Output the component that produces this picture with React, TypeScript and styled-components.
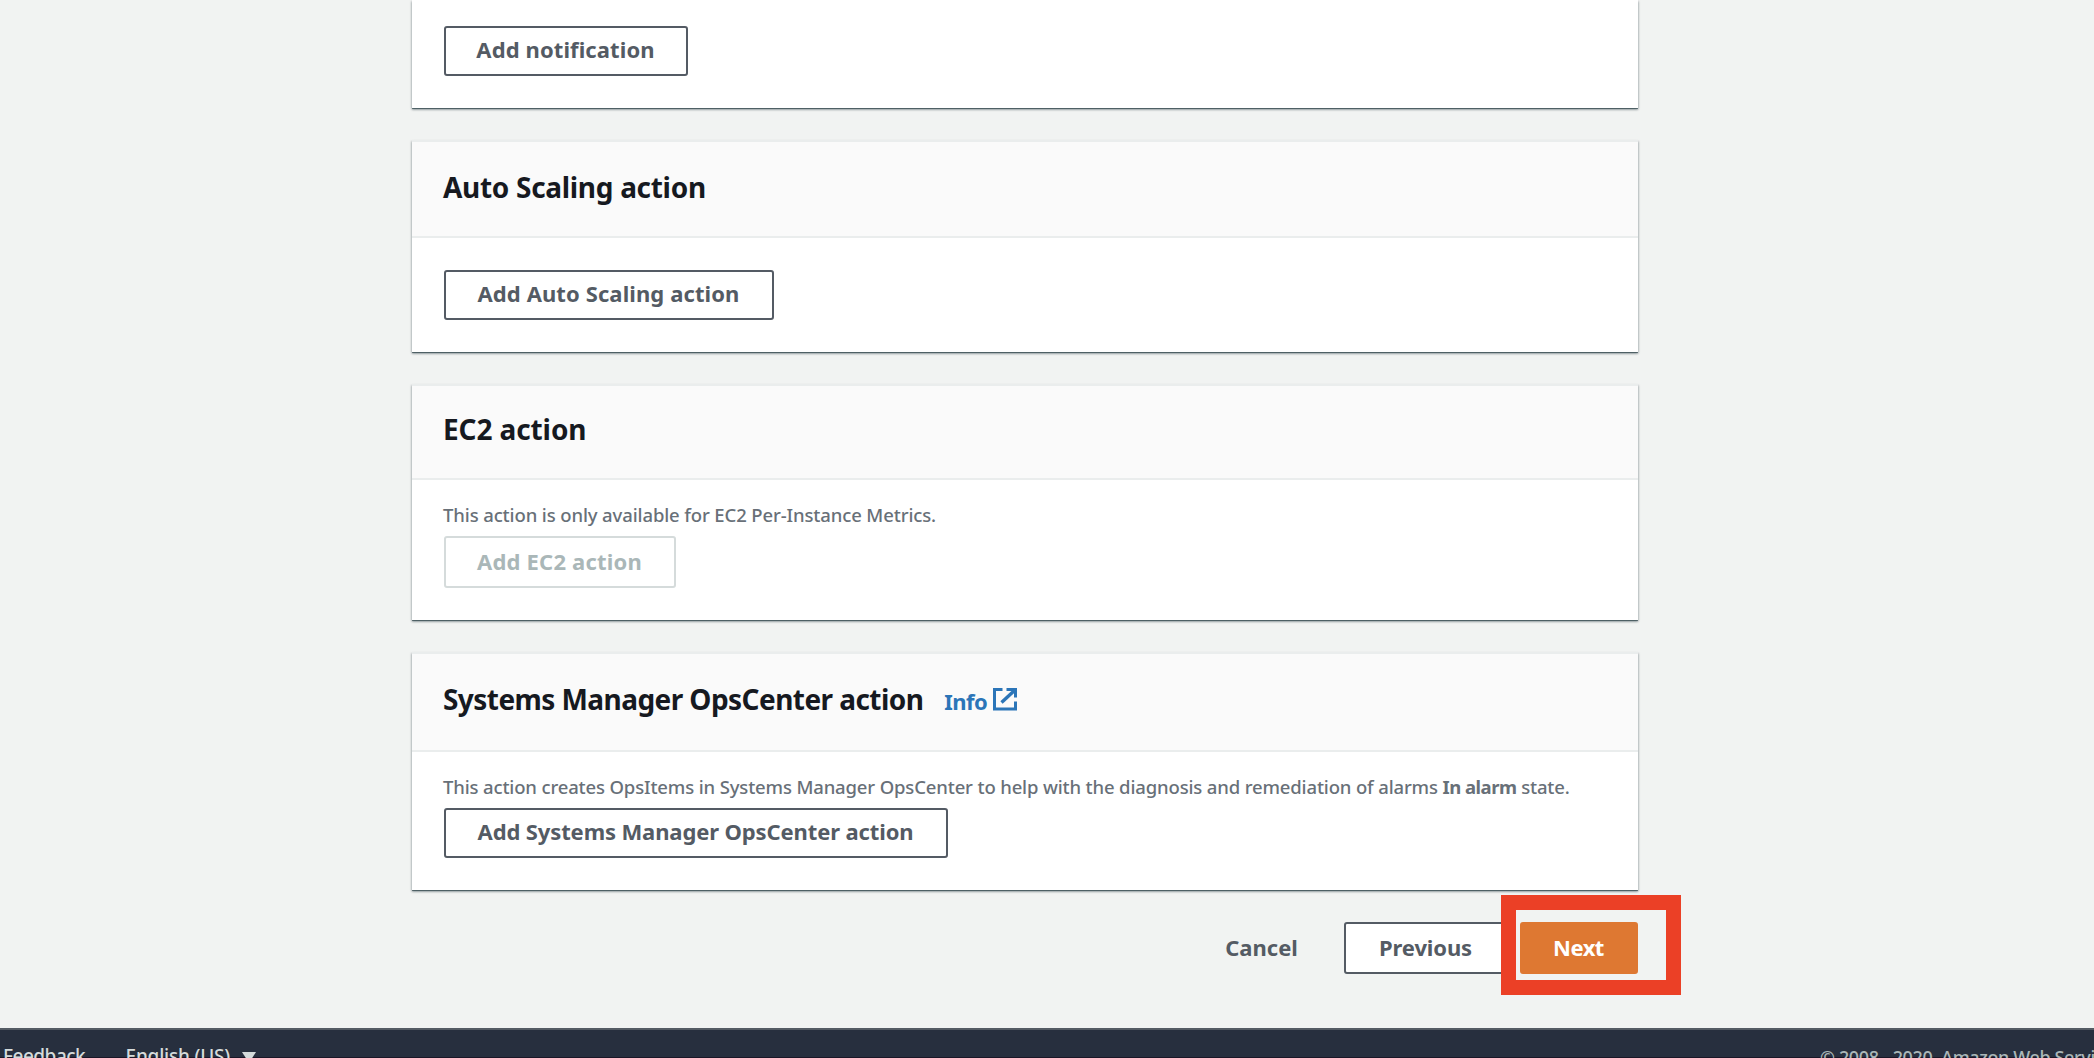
import React from 'react';
import styled, { createGlobalStyle } from 'styled-components';

const GlobalStyle = createGlobalStyle`
  * { box-sizing: border-box; }
  body {
    margin: 0;
    background: #f1f3f2;
    font-family: "Noto Sans", "Open Sans", sans-serif;
    overflow: hidden;
  }
`;

const Page = styled.div`
  display: flex;
  flex-direction: column;
  height: 1058px;
  overflow: hidden;
  background: #f1f3f2;
`;

const Main = styled.main`
  display: flex;
  flex-direction: column;
  gap: 32px;
  width: 1226px;
  height: 1028px;
  flex: none;
  margin-left: 412px;
`;

const Card = styled.section<{ $height: number }>`
  flex: none;
  height: ${(p) => p.$height}px;
  background: #fff;
  box-shadow: 0 2px 2px 0 rgba(0, 28, 36, 0.3), 1px 1px 2px 0 rgba(0, 28, 36, 0.15),
    -1px 1px 2px 0 rgba(0, 28, 36, 0.15), 0 1px 0 0 #879596;
`;

const CardHeader = styled.header<{ $height: number; $top: number }>`
  display: flex;
  align-items: flex-start;
  height: ${(p) => p.$height}px;
  padding: ${(p) => p.$top}px 31px 0;
  background: #fafafa;
  border-top: 2px solid #eaeded;
  border-bottom: 2px solid #eaeded;
`;

const Title = styled.h2<{ $track: number }>`
  margin: 0;
  color: #16191f;
  font-size: 28px;
  line-height: 38px;
  font-weight: 700;
  letter-spacing: ${(p) => p.$track}px;
  white-space: nowrap;
`;

const InfoLink = styled.a`
  display: flex;
  align-items: flex-start;
  gap: 6px;
  margin: 3px 0 0 21px;
  color: #2b75b8;
  font-size: 22px;
  line-height: 36px;
  font-weight: 700;
  letter-spacing: -0.6px;

  svg {
    margin-top: 4px;
  }
`;

const CardBody = styled.div<{ $top: number }>`
  display: flex;
  flex-direction: column;
  align-items: flex-start;
  padding: ${(p) => p.$top}px 32px 0;
`;

const Hint = styled.p<{ $gap: number; $track: number }>`
  margin: 0 0 ${(p) => p.$gap}px -1px;
  color: #687078;
  font-size: 18.5px;
  line-height: 26px;
  font-weight: 500;
  letter-spacing: ${(p) => p.$track}px;
  white-space: nowrap;

  strong {
    font-weight: 700;
    letter-spacing: -0.5px;
  }
`;

type Tone = 'normal' | 'disabled' | 'link' | 'primary';

const tones: Record<Tone, { text: string; line: string; fill: string }> = {
  normal: { text: '#545b64', line: '#545b64', fill: '#fff' },
  disabled: { text: '#aab7b8', line: '#d5dbdb', fill: '#fff' },
  link: { text: '#545b64', line: 'transparent', fill: 'transparent' },
  primary: { text: '#fff', line: '#de7832', fill: '#de7832' },
};

const Button = styled.button<{ $tone?: Tone; $width: number; $tall?: boolean; $track?: number }>`
  flex: none;
  display: flex;
  align-items: center;
  justify-content: center;
  width: ${(p) => p.$width}px;
  height: ${(p) => (p.$tall ? 52 : 50)}px;
  padding: 0 1px ${(p) => (p.$tall ? 2 : 4)}px 0;
  border: 2px solid ${(p) => tones[p.$tone ?? 'normal'].line};
  border-radius: 3px;
  background: ${(p) => tones[p.$tone ?? 'normal'].fill};
  color: ${(p) => tones[p.$tone ?? 'normal'].text};
  font-family: inherit;
  font-size: 22px;
  line-height: 30px;
  font-weight: 700;
  letter-spacing: ${(p) => p.$track ?? 0.1}px;
  white-space: nowrap;
`;

const Actions = styled.div`
  display: flex;
  justify-content: flex-end;
`;

const NextSlot = styled.div`
  position: relative;
  margin-left: 12px;
`;

const Highlight = styled.div`
  position: absolute;
  left: -19px;
  top: -27px;
  width: 180px;
  height: 100px;
  border: 15px solid #eb4026;
`;

const Footer = styled.footer`
  flex: none;
  display: flex;
  align-items: flex-start;
  height: 30px;
  padding: 13px 0 0 3px;
  overflow: hidden;
  border-top: 2px solid #545b64;
  background: #272f3e;
  box-shadow: inset 0 -1px 0 #1a1626;
  color: #d5dbdb;
  white-space: nowrap;
`;

const FooterItem = styled.span<{ $width?: number; $track: number }>`
  flex: none;
  width: ${(p) => (p.$width ? `${p.$width}px` : 'auto')};
  font-size: 19px;
  line-height: 26px;
  font-weight: 500;
  letter-spacing: ${(p) => p.$track}px;
`;

const Caret = styled.span`
  margin: 9px 0 0 12px;
  border: 7.5px solid transparent;
  border-top: 11px solid #d5dbdb;
  border-bottom: 0;
`;

const Copyright = styled.span`
  flex: none;
  width: 274px;
  margin: 1px 0 0 auto;
  color: #aab7b8;
  font-size: 18px;
  line-height: 26px;
  font-weight: 500;
  letter-spacing: -0.37px;
`;

const ExternalIcon = () => (
  <svg width="24" height="24" viewBox="0 0 24 24" fill="none" stroke="currentColor" strokeWidth="3">
    <path d="M9.5 2.5H1.5V22H22.5V14.5M13.5 2.5H22.5V10.5" />
    <path d="M22 3L8.5 15.5" strokeWidth="3.4" />
  </svg>
);

export default function App() {
  return (
    <Page>
      <GlobalStyle />
      <Main>
        <Card $height={108}>
          <CardBody $top={26}>
            <Button $width={244}>Add notification</Button>
          </CardBody>
        </Card>
        <Card $height={212}>
          <CardHeader $height={98} $top={26}>
            <Title $track={-0.3}>Auto Scaling action</Title>
          </CardHeader>
          <CardBody $top={32}>
            <Button $width={330}>Add Auto Scaling action</Button>
          </CardBody>
        </Card>
        <Card $height={236}>
          <CardHeader $height={96} $top={24}>
            <Title $track={-0.1}>EC2 action</Title>
          </CardHeader>
          <CardBody $top={22}>
            <Hint $gap={8} $track={-0.12}>
              This action is only available for EC2 Per-Instance Metrics.
            </Hint>
            <Button $tone="disabled" $width={232} $tall $track={0.2} disabled>
              Add EC2 action
            </Button>
          </CardBody>
        </Card>
        <Card $height={238}>
          <CardHeader $height={100} $top={26}>
            <Title $track={-0.56}>Systems Manager OpsCenter action</Title>
            <InfoLink>
              Info
              <ExternalIcon />
            </InfoLink>
          </CardHeader>
          <CardBody $top={22}>
            <Hint $gap={8} $track={-0.15}>
              This action creates OpsItems in Systems Manager OpsCenter to help with the diagnosis and
              remediation of alarms <strong>In alarm</strong> state.
            </Hint>
            <Button $width={504} $track={-0.12}>
              Add Systems Manager OpsCenter action
            </Button>
          </CardBody>
        </Card>
        <Actions>
          <Button $tone="link" $width={164} $tall $track={0}>
            Cancel
          </Button>
          <Button $width={164} $tall $track={-0.13}>
            Previous
          </Button>
          <NextSlot>
            <Button $tone="primary" $width={118} $tall $track={-0.5}>
              Next
            </Button>
            <Highlight />
          </NextSlot>
        </Actions>
      </Main>
      <Footer>
        <FooterItem $width={122.5} $track={-0.5}>
          Feedback
        </FooterItem>
        <FooterItem $track={-0.2}>English (US)</FooterItem>
        <Caret />
        <Copyright>© 2008 - 2020, Amazon Web Services, Inc. or its affiliates.</Copyright>
      </Footer>
    </Page>
  );
}
